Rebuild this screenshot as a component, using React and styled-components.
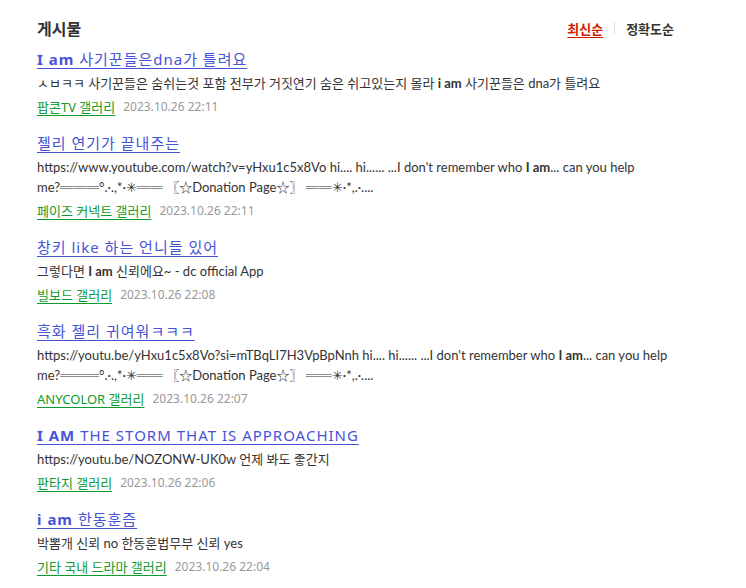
import React from "react";
import styled, { createGlobalStyle } from "styled-components";

const Global = createGlobalStyle`
  body {
    margin: 0;
    background: #fff;
    font-family: "Noto Sans", "Noto Sans CJK KR", sans-serif;
    color: #333;
  }
`;

const Page = styled.div`
  width: 637px;
  padding: 14px 0 0 37px;
`;

const Header = styled.div`
  display: flex;
  justify-content: space-between;
  align-items: center;
  height: 28px;
`;

const Heading = styled.h2`
  margin: 0;
  font-size: 16px;
  font-weight: 700;
  color: #333;
  font-family: "Noto Sans CJK KR", sans-serif;
`;

const Sort = styled.div`
  display: flex;
  align-items: center;
  gap: 11px;
  font-size: 13px;
  font-weight: 700;
  font-family: "Noto Sans CJK KR", sans-serif;
`;

const SortLink = styled.a`
  color: ${(p) => (p.$active ? "#d31900" : "#333")};
  text-decoration: ${(p) => (p.$active ? "underline" : "none")};
  text-underline-offset: 3px;
`;

const Divider = styled.span`
  width: 1px;
  height: 12px;
  background: #ddd;
`;

const List = styled.ul`
  list-style: none;
  margin: 5px 0 0;
  padding: 0;
`;

const Item = styled.li`
  display: flex;
  flex-direction: column;
  align-items: flex-start;
  margin-bottom: 12px;
`;

const Title = styled.a`
  display: block;
  font-size: 15px;
  line-height: 24px;
  height: 24px;
  letter-spacing: 1px;
  color: #4653d6;
  text-decoration: underline;
  text-underline-offset: 3px;
  b { font-weight: 700; }
`;

const Body = styled.p`
  margin: 0;
  width: 637px;
  font-family: "Lato", "Noto Sans CJK KR", sans-serif;
  font-size: 13px;
  line-height: 20px;
  padding: 2px 0 2px;
  color: #333;
  b { font-weight: 700; }
`;

const NoBreak = styled.span`
  white-space: nowrap;
`;

const Meta = styled.div`
  display: flex;
  gap: 8px;
  font-size: 13px;
  line-height: 24px;
`;

const Gallery = styled.a`
  color: #109a2b;
  text-decoration: underline;
  text-underline-offset: 3px;
`;

const Date = styled.span`
  color: #999;
  font-size: 12px;
`;

const donation = (
  <>
    <NoBreak>me?═══°.·.,*·✳══</NoBreak> 〖☆Donation Page☆〗 ══✳·*,.·....
  </>
);

const posts = [
  {
    title: (<><b>I am</b> 사기꾼들은dna가 틀려요</>),
    body: (<>ㅅㅂㅋㅋ 사기꾼들은 숨쉬는것 포함 전부가 거짓연기 숨은 쉬고있는지 몰라 <b>i am</b> 사기꾼들은 dna가 틀려요</>),
    gallery: "팝콘TV 갤러리",
    date: "2023.10.26 22:11",
  },
  {
    title: <>젤리 연기가 끝내주는</>,
    body: (<>https://www.youtube.com/watch?v=yHxu1c5x8Vo hi.... hi...... ...I don't remember who <b>I am</b>... can you help {donation}</>),
    gallery: "페이즈 커넥트 갤러리",
    date: "2023.10.26 22:11",
  },
  {
    title: <>창키 like 하는 언니들 있어</>,
    body: (<>그렇다면 <b>I am</b> 신뢰에요~ - dc official App</>),
    gallery: "빌보드 갤러리",
    date: "2023.10.26 22:08",
  },
  {
    title: <>흑화 젤리 귀여워ㅋㅋㅋ</>,
    body: (<>https://youtu.be/yHxu1c5x8Vo?si=mTBqLI7H3VpBpNnh hi.... hi...... ...I don't remember who <b>I am</b>... can you help {donation}</>),
    gallery: "ANYCOLOR 갤러리",
    date: "2023.10.26 22:07",
  },
  {
    title: (<><b>I AM</b> THE STORM THAT IS APPROACHING</>),
    body: <>https://youtu.be/NOZONW-UK0w 언제 봐도 좋간지</>,
    gallery: "판타지 갤러리",
    date: "2023.10.26 22:06",
  },
  {
    title: (<><b>i am</b> 한동훈즘</>),
    body: <>박뽐개 신뢰 no 한동훈법무부 신뢰 yes</>,
    gallery: "기타 국내 드라마 갤러리",
    date: "2023.10.26 22:04",
  },
];

export default function App() {
  return (
    <>
      <Global />
      <Page>
        <Header>
          <Heading>게시물</Heading>
          <Sort>
            <SortLink $active>최신순</SortLink>
            <Divider />
            <SortLink>정확도순</SortLink>
          </Sort>
        </Header>
        <List>
          {posts.map((p, i) => (
            <Item key={i}>
              <Title>{p.title}</Title>
              <Body>{p.body}</Body>
              <Meta>
                <Gallery>{p.gallery}</Gallery>
                <Date>{p.date}</Date>
              </Meta>
            </Item>
          ))}
        </List>
      </Page>
    </>
  );
}
